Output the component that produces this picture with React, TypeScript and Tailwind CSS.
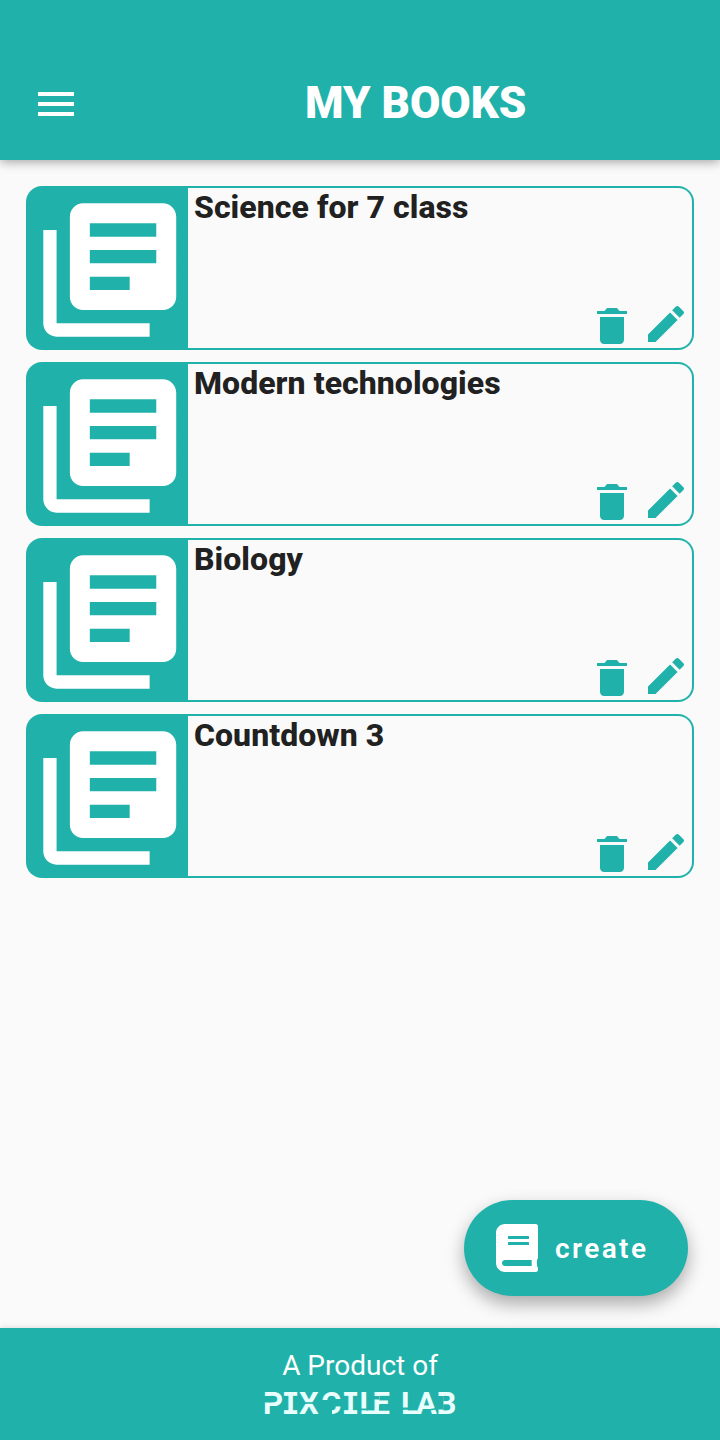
const books = [
  { id: 1, title: "Science for 7 class" },
  { id: 2, title: "Modern technologies" },
  { id: 3, title: "Biology" },
  { id: 4, title: "Countdown 3" },
];

function LibraryIcon() {
  return (
    <svg className="h-40 w-[159.5px] shrink-0 fill-white" viewBox="0 0 24 24" preserveAspectRatio="none">
      <path d="M4 6H2v14c0 1.1.9 2 2 2h14v-2H4V6zm16-4H8c-1.1 0-2 .9-2 2v12c0 1.1.9 2 2 2h12c1.1 0 2-.9 2-2V4c0-1.1-.9-2-2-2zm-1 9H9V9h10v2zm-4 4H9v-2h6v2zm4-8H9V5h10v2z" />
    </svg>
  );
}

function TrashIcon() {
  return (
    <svg className="h-12 w-12 fill-current" viewBox="0 0 512 512">
      <path d="M128 405.429C128 428.846 147.198 448 170.667 448h170.667C364.802 448 384 428.846 384 405.429V160H128v245.429zM416 96h-80l-26.785-32H202.786L176 96H96v32h320V96z" />
    </svg>
  );
}

function PencilIcon() {
  return (
    <svg className="h-12 w-12 fill-current" viewBox="0 0 512 512">
      <path d="M64 368v80h80l235.727-235.729-79.999-79.998L64 368zm377.602-217.602c8.531-8.531 8.531-21.334 0-29.865l-50.135-50.135c-8.531-8.531-21.334-8.531-29.865 0l-39.468 39.469 79.999 79.998 39.469-39.467z" />
    </svg>
  );
}

function BookIcon() {
  return (
    <svg className="h-12 w-[42px] fill-current" viewBox="0 0 448 512">
      <path d="M448 360V24c0-13.3-10.7-24-24-24H96C43 0 0 43 0 96v320c0 53 43 96 96 96h328c13.3 0 24-10.7 24-24v-16c0-7.5-3.5-14.3-8.9-18.7-4.2-15.4-4.2-59.3 0-74.7 5.4-4.3 8.9-11.1 8.9-18.6zM128 134c0-3.3 2.7-6 6-6h212c3.3 0 6 2.7 6 6v20c0 3.3-2.7 6-6 6H134c-3.3 0-6-2.7-6-6v-20zm0 64c0-3.3 2.7-6 6-6h212c3.3 0 6 2.7 6 6v20c0 3.3-2.7 6-6 6H134c-3.3 0-6-2.7-6-6v-20zm253.4 250H96c-17.7 0-32-14.3-32-32 0-17.6 14.4-32 32-32h285.4c-1.9 17.1-1.9 46.9 0 64z" />
    </svg>
  );
}

// Stencil wordmark: real letters with small gaps laid over the strokes
function Wordmark() {
  return (
    <svg className="-mt-[3px] h-[46px] w-[200px] shrink-0" viewBox="0 -10 200 46">
      <text
        x="3 21.5 39 61 81.5 99.5 112.5 130 141 156 176.5"
        y="24"
        className="fill-[#e9fffd] font-[Roboto,sans-serif] text-[31px] font-bold"
      >
        P
        <tspan className="font-['DejaVu_Sans_Mono',monospace] text-[30px]">I</tspan>
        XC
        <tspan className="font-['DejaVu_Sans_Mono',monospace] text-[30px]">I</tspan>
        LE LAB
      </text>
      <g className="fill-[#20b2aa]">
        <path d="M4 6h7v6.5H4z" />
        <path d="M38 12.2h23v1.6H38z" />
        <path d="M61 10h11v15H61zM71 9h11.5v7H71z" />
        <path d="M100 18.5h8v1.8h-8z" />
        <path d="M112 6h7v3.5h-7zM119 15.5h13v5h-13z" />
        <path d="M142 17.5h7v2.3h-7z" />
        <path d="M170 19l6-1 1 1.5-7 1z" />
        <path d="M177 6h6.5v13.5H177z" />
      </g>
    </svg>
  );
}

function BookCard({ title }: { title: string }) {
  return (
    <li className="flex h-41 rounded-[16px] bg-[#20b2aa] p-0.5">
      <div className="flex w-40 shrink-0 pt-0.5 pl-[1.5px]">
        <LibraryIcon />
      </div>
      <div className="flex flex-1 flex-col justify-between rounded-r-[14px] bg-[#fafafa] pl-1.5">
        <h2 className="text-[32px] leading-[38px] font-extrabold tracking-[0.05px] text-[#212121]">{title}</h2>
        <div className="flex justify-end gap-1.5 pr-0.5">
          <button type="button" aria-label="Delete" className="mt-0.5 -mb-0.5">
            <TrashIcon />
          </button>
          <button type="button" aria-label="Edit">
            <PencilIcon />
          </button>
        </div>
      </div>
    </li>
  );
}

export default function App() {
  return (
    <div className="relative flex h-[1440px] w-[720px] flex-col bg-[#fafafa] font-[Roboto,sans-serif] text-[#20b2aa]">
      <header className="flex h-40 shrink-0 items-end bg-[#20b2aa] pb-8 pl-8 text-white shadow-[0_2px_10px_rgba(0,0,0,0.35)]">
        <button type="button" aria-label="Menu" className="flex h-12 w-12 items-center justify-center">
          <svg className="h-6 w-9 fill-current" viewBox="0 0 36 24">
            <path d="M0 0h36v4H0zM0 10h36v4H0zM0 20h36v4H0z" />
          </svg>
        </button>
        <h1 className="ml-[225px] text-[44px] leading-[50px] font-black">MY BOOKS</h1>
      </header>

      <main className="flex-1 px-6.5 pt-6.5">
        <ul className="flex flex-col gap-3">
          {books.map((book) => (
            <BookCard key={book.id} title={book.title} />
          ))}
        </ul>
      </main>

      <button
        type="button"
        className="absolute right-8 bottom-36 flex h-24 w-56 items-center gap-[17px] rounded-full bg-[#20b2aa] pl-8 text-white shadow-[0_8px_18px_rgba(0,0,0,0.32)]"
      >
        <BookIcon />
        <span className="pt-0.5 text-[28px] font-semibold tracking-[2.4px]">create</span>
      </button>

      <footer className="flex h-28 shrink-0 flex-col items-center bg-[#20b2aa] pt-[21px] text-white shadow-[0_-1px_5px_rgba(0,0,0,0.1)]">
        <p className="text-[28px] leading-[34px]">A Product of</p>
        <Wordmark />
      </footer>
    </div>
  );
}
